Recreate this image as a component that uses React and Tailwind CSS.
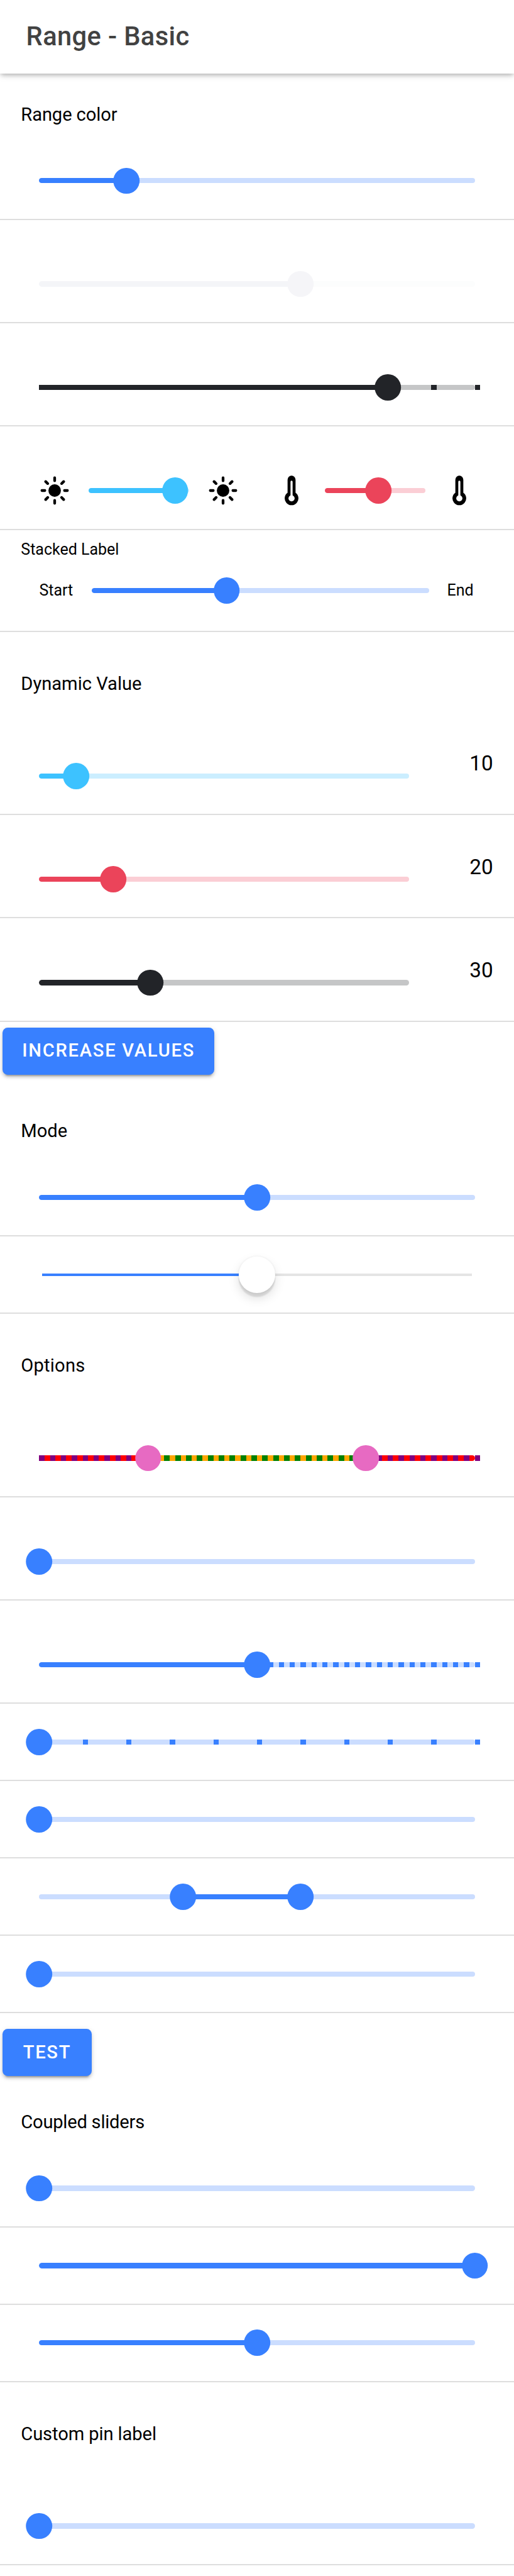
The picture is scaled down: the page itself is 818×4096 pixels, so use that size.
import { IoSunny } from "react-icons/io5";

const PALETTE = {
  primary: { bar: "bg-[#cbddff]", active: "bg-[#3880ff]", knob: "bg-[#3880ff]", tick: "bg-[#3880ff]", activeTick: "bg-[#3880ff]" },
  light: { bar: "bg-[#fcfdfd]", active: "bg-[#f4f5f8]", knob: "bg-[#f5f5f8]", tick: "bg-[#f4f5f8]", activeTick: "bg-[#f4f5f8]" },
  dark: { bar: "bg-[#c5c6c7]", active: "bg-[#222428]", knob: "bg-[#222428]", tick: "bg-[#222428]", activeTick: "bg-[#222428]" },
  secondary: { bar: "bg-[#cbeeff]", active: "bg-[#3dc2ff]", knob: "bg-[#3dc2ff]", tick: "bg-[#3dc2ff]", activeTick: "bg-[#3dc2ff]" },
  danger: { bar: "bg-[#fbced5]", active: "bg-[#eb445a]", knob: "bg-[#eb445a]", tick: "bg-[#eb445a]", activeTick: "bg-[#eb445a]" },
  custom: { bar: "bg-[#ff0000]", active: "bg-[#008000]", knob: "bg-[#e76ac2]", tick: "bg-[#800080]", activeTick: "bg-[#ffa500]" },
};

function Thermometer() {
  return (
    <svg viewBox="0 0 512 512" className="size-[50px]">
      <path d="M256 14a65 65 0 0 0-65 65v213a112 112 0 1 0 130 0V79a65 65 0 0 0-65-65z" fill="#000" />
      <path d="M256 112v240" stroke="#fff" strokeWidth="34" strokeLinecap="round" />
      <circle cx="256" cy="383" r="50" fill="#fff" />
    </svg>
  );
}

function Range({ color = "primary", from = 0, to, dual = false, ticks = 0, tickFrom = 0, className = "grow" }) {
  const c = PALETTE[color];
  const marks = ticks
    ? Array.from({ length: ticks + 1 }, (_, i) => (i * 100) / ticks).filter((p) => p >= tickFrom)
    : [];
  return (
    <div className={`relative flex h-[42px] items-center ${className}`}>
      <div className={`h-[8.3px] w-full overflow-hidden rounded-full ${c.bar}`}>
        <div className={`h-full rounded-full ${c.active}`} style={{ marginLeft: `${from}%`, width: `${to - from}%` }} />
      </div>
      {marks.map((p) => (
        <span
          key={p}
          className={`absolute top-[16.85px] h-[8.3px] w-[8.3px] ${p >= from && p <= to ? c.activeTick : c.tick}`}
          style={{ left: `${p}%` }}
        />
      ))}
      {dual && (
        <span className={`absolute top-[0.2px] h-[41.6px] w-[41.6px] -translate-x-1/2 rounded-full ${c.knob}`} style={{ left: `${from}%` }} />
      )}
      <span className={`absolute top-[0.2px] h-[41.6px] w-[41.6px] -translate-x-1/2 rounded-full ${c.knob}`} style={{ left: `${to}%` }} />
    </div>
  );
}

function Item({ pin = false, children }) {
  return (
    <div
      className={`flex shrink-0 items-end border-b-2 border-[#dedede] px-[62.4px] pb-[39.4px] ${pin ? "h-[164.3px]" : "h-[122.95px]"}`}
    >
      {children}
    </div>
  );
}

function Heading({ className, children }) {
  return (
    <div className={`flex shrink-0 items-end pb-[28.2px] pl-[33.3px] text-[29.14px] leading-[34px] ${className}`}>
      <h2>{children}</h2>
    </div>
  );
}

function Button({ className, children }) {
  return (
    <button
      className={`ml-[4.2px] flex h-[75px] shrink-0 items-center justify-center rounded-[8.3px] bg-[#3880ff] text-[29.14px] font-medium tracking-[1.75px] text-white uppercase shadow-[0_6px_2px_-4px_rgba(0,0,0,0.2),0_4px_4px_0_rgba(0,0,0,0.14),0_2px_10px_0_rgba(0,0,0,0.12)] ${className}`}
    >
      {children}
    </button>
  );
}

function DynamicItem({ color, value }) {
  return (
    <div className="flex h-[164.3px] shrink-0 items-end justify-between border-b-2 border-[#dedede] pr-[33.3px] pb-[39.4px] pl-[62.4px]">
      <Range color={color} to={value} className="w-[589px]" />
      <span className="pb-[20.5px] text-[33.3px] leading-[40px]">{value}</span>
    </div>
  );
}

export default function App() {
  return (
    <div className="flex h-[4096px] w-[818px] flex-col overflow-hidden bg-white font-[Roboto,sans-serif] text-black">
      <header className="flex h-[116.6px] shrink-0 items-center pl-[41.6px] shadow-[0_4px_8px_-2px_rgba(0,0,0,0.2),0_8px_10px_0_rgba(0,0,0,0.03),0_2px_6px_0_rgba(0,0,0,0.12)]">
        <h1 className="text-[41.63px] font-medium tracking-[0.38px] text-[#424242]">Range - Basic</h1>
      </header>

      <Heading className="h-[110.2px] tracking-[-0.1px]">Range color</Heading>
      <Item><Range to={20} /></Item>
      <Item pin><Range color="light" to={60} /></Item>
      <Item pin><Range color="dark" to={80} ticks={10} /></Item>
      <Item pin>
        <div className="flex h-[42px] w-full items-center justify-between">
          <div className="flex items-center gap-[29px]">
            <IoSunny className="size-[50px]" />
            <Range color="secondary" to={85.7} className="w-[160px]" />
            <IoSunny className="size-[50px]" />
          </div>
          <div className="flex items-center gap-[28.5px]">
            <Thermometer />
            <Range color="danger" to={53.2} className="w-[160px]" />
            <Thermometer />
          </div>
        </div>
      </Item>

      <div className="flex h-[162.4px] shrink-0 flex-col border-b-2 border-[#dedede] pt-[16px]">
        <span className="pl-[33.3px] text-[25px] leading-[30px]">Stacked Label</span>
        <div className="mt-[29.5px] flex h-[42px] items-center px-[62.4px] text-[25px]">
          <span className="w-[83.7px]">Start</span>
          <Range to={40} />
          <span className="w-[73px] pl-[29px]">End</span>
        </div>
      </div>

      <Heading className="h-[126.9px]">Dynamic Value</Heading>
      <DynamicItem color="secondary" value={10} />
      <DynamicItem color="danger" value={20} />
      <DynamicItem color="dark" value={30} />
      <Button className="mt-[8.8px] w-[337px]">Increase Values</Button>

      <Heading className="h-[134.8px]">Mode</Heading>
      <Item><Range to={50} /></Item>
      <Item>
        <div className="relative mx-[4.2px] flex h-[42px] grow items-center">
          <div className="h-[4.2px] w-full bg-[#e4e4e4]">
            <div className="h-full w-1/2 bg-[#3880ff]" />
          </div>
          <span className="absolute top-[-8.1px] left-1/2 size-[58.2px] -translate-x-1/2 rounded-full bg-white shadow-[0_6.2px_2px_rgba(0,0,0,0.1),0_8.3px_16.6px_rgba(0,0,0,0.13),0_0_0_2px_rgba(0,0,0,0.02)]" />
        </div>
      </Item>

      <Heading className="h-[127.3px] tracking-[0.2px]">Options</Heading>
      <Item pin><Range color="custom" dual from={25} to={75} ticks={40} /></Item>
      <Item pin><Range to={0} /></Item>
      <Item pin><Range to={50} ticks={40} tickFrom={50} /></Item>
      <Item><Range to={0} ticks={10} /></Item>
      <Item><Range to={0} /></Item>
      <Item><Range dual from={33} to={60} /></Item>
      <Item><Range to={0} /></Item>
      <Button className="mt-[25px] w-[141.5px]">Test</Button>

      <Heading className="h-[117.7px] tracking-[-0.23px]">Coupled sliders</Heading>
      <Item><Range to={0} /></Item>
      <Item><Range to={100} /></Item>
      <Item><Range to={50} /></Item>

      <Heading className="h-[127px] tracking-[-0.1px]">Custom pin label</Heading>
      <Item pin><Range to={0} /></Item>
    </div>
  );
}
